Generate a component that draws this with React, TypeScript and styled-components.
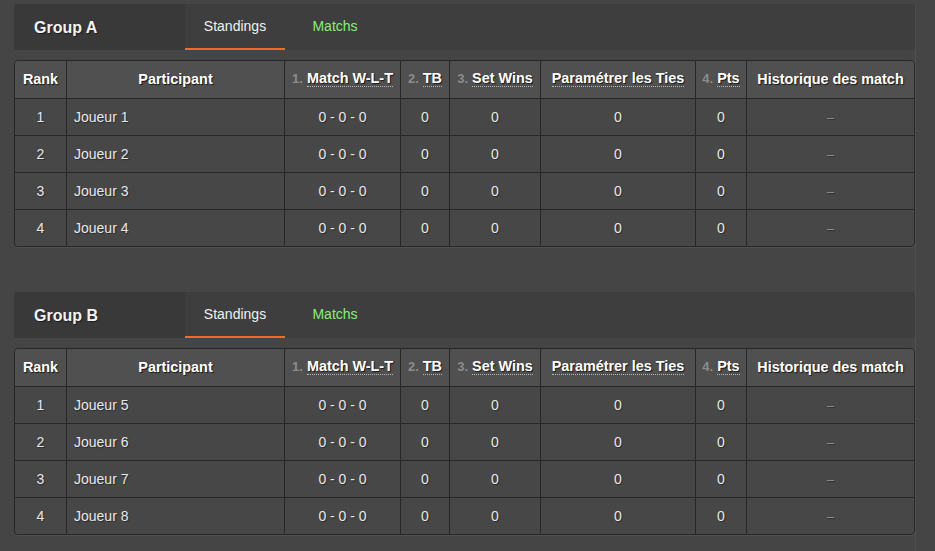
import React from "react";
import styled, { createGlobalStyle } from "styled-components";

const GlobalStyle = createGlobalStyle`
  html, body {
    margin: 0;
    padding: 0;
    background: #454545;
    font-family: "Liberation Sans", Arial, sans-serif;
  }
  * { box-sizing: border-box; }
`;

const Page = styled.div`
  padding: 4px 0 0 14px;
  min-height: 100vh;
`;

const Content = styled.div`
  width: 902px;
  min-height: calc(100vh - 4px);
  border-right: 1px solid #4e4e4e;
  padding-right: 1px;
  display: flex;
  flex-direction: column;
  gap: 45px;
`;

const Group = styled.section`
  display: flex;
  flex-direction: column;
  gap: 10px;
  width: 901px;
`;

const GroupHeader = styled.header`
  display: flex;
  height: 46px;
  background: #3e3e3e;
  border-radius: 3px;
  overflow: hidden;
`;

const GroupTitle = styled.h2`
  margin: 0;
  width: 171px;
  padding-left: 20px;
  padding-top: 2px;
  display: flex;
  align-items: center;
  background: #393939;
  color: #f2f2f2;
  font-size: 16px;
  font-weight: bold;
  text-shadow: 1px 1px 1px #1c1c1c;
`;

const Tab = styled.div<{ $active?: boolean }>`
  width: 100px;
  display: flex;
  align-items: center;
  justify-content: center;
  padding-top: 0;
  font-size: 14px;
  color: ${(p) => (p.$active ? "#f0f0f0" : "#86ee7c")};
  border-bottom: 2px solid ${(p) => (p.$active ? "#f26b22" : "transparent")};
  cursor: pointer;
`;

const Grid = styled.div`
  display: grid;
  grid-template-columns: 52px 218px 116px 49px 91px 155px 51px 167px;
  border: 1px solid #272727;
  border-radius: 4px;
  overflow: hidden;
  background: #474747;
  box-shadow: 1px 1px 0 #505050;
`;

const HeadCell = styled.div<{ $last?: boolean }>`
  height: 38px;
  display: flex;
  align-items: center;
  justify-content: center;
  padding-bottom: 2px;
  background: #505050;
  border-bottom: 1px solid #272727;
  border-right: ${(p) => (p.$last ? "none" : "1px solid #272727")};
  color: #ffffff;
  font-size: 14.4px;
  font-weight: bold;
  white-space: nowrap;
  text-shadow: 1px 1px 1px #1a1a1a;
`;

const Order = styled.span`
  color: #8c8c8c;
  font-size: 13px;
  margin-right: 4px;
  text-shadow: none;
`;

const Dotted = styled.span`
  border-bottom: 1px dotted #b5b5b5;
  line-height: 15px;
`;

const Cell = styled.div<{ $last?: boolean; $lastRow?: boolean; $left?: boolean }>`
  height: ${(p) => (p.$lastRow ? "36px" : "37px")};
  display: flex;
  align-items: center;
  justify-content: ${(p) => (p.$left ? "flex-start" : "center")};
  padding-left: ${(p) => (p.$left ? "7px" : "0")};
  border-bottom: ${(p) => (p.$lastRow ? "none" : "1px solid #272727")};
  border-right: ${(p) => (p.$last ? "none" : "1px solid #272727")};
  color: #e8e8e8;
  font-size: 14px;
  text-shadow: 1px 1px 1px #2c2c2c;
`;

const Dash = styled.span`
  color: #8e8e8e;
  font-size: 13px;
`;

type Col = { label: string; order?: number; dotted?: boolean };

const columns: Col[] = [
  { label: "Rank" },
  { label: "Participant" },
  { label: "Match W-L-T", order: 1, dotted: true },
  { label: "TB", order: 2, dotted: true },
  { label: "Set Wins", order: 3, dotted: true },
  { label: "Paramétrer les Ties", dotted: true },
  { label: "Pts", order: 4, dotted: true },
  { label: "Historique des match" },
];

const StandingsTable: React.FC<{ players: string[] }> = ({ players }) => (
  <Grid role="table">
    {columns.map((c, i) => (
      <HeadCell key={c.label} role="columnheader" $last={i === columns.length - 1}>
        {c.order !== undefined && <Order>{c.order}.</Order>}
        {c.dotted ? <Dotted>{c.label}</Dotted> : c.label}
      </HeadCell>
    ))}
    {players.map((p, r) => {
      const lr = r === players.length - 1;
      return (
        <React.Fragment key={p}>
          <Cell role="cell" $lastRow={lr}>{r + 1}</Cell>
          <Cell role="cell" $lastRow={lr} $left>{p}</Cell>
          <Cell role="cell" $lastRow={lr}>0 - 0 - 0</Cell>
          <Cell role="cell" $lastRow={lr}>0</Cell>
          <Cell role="cell" $lastRow={lr}>0</Cell>
          <Cell role="cell" $lastRow={lr}>0</Cell>
          <Cell role="cell" $lastRow={lr}>0</Cell>
          <Cell role="cell" $lastRow={lr} $last>
            <Dash>–</Dash>
          </Cell>
        </React.Fragment>
      );
    })}
  </Grid>
);

const groups = [
  { name: "Group A", players: ["Joueur 1", "Joueur 2", "Joueur 3", "Joueur 4"] },
  { name: "Group B", players: ["Joueur 5", "Joueur 6", "Joueur 7", "Joueur 8"] },
];

export default function App() {
  return (
    <>
      <GlobalStyle />
      <Page>
        <Content>
          {groups.map((g) => (
            <Group key={g.name}>
              <GroupHeader>
                <GroupTitle>{g.name}</GroupTitle>
                <Tab $active>Standings</Tab>
                <Tab>Matchs</Tab>
              </GroupHeader>
              <StandingsTable players={g.players} />
            </Group>
          ))}
        </Content>
      </Page>
    </>
  );
}
